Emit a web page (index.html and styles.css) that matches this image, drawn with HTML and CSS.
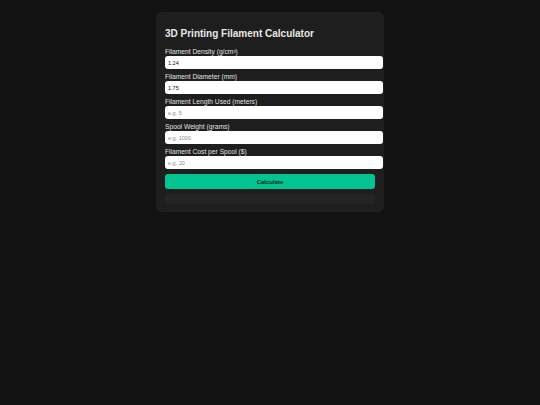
FILE: index.html
```html
<!DOCTYPE html>
<html>
<head>
<meta charset="utf-8">
<link rel="stylesheet" href="styles.css">
</head>
<body>
<div class="container">
  <h1 class="title">3D Printing Filament Calculator</h1>
  <div class="field">
    <label class="label">Filament Density (g/cm³)</label>
    <input class="input" type="text" value="1.24">
  </div>
  <div class="field">
    <label class="label">Filament Diameter (mm)</label>
    <input class="input" type="text" value="1.75">
  </div>
  <div class="field">
    <label class="label">Filament Length Used (meters)</label>
    <input class="input" type="text" placeholder="e.g. 5">
  </div>
  <div class="field">
    <label class="label">Spool Weight (grams)</label>
    <input class="input" type="text" placeholder="e.g. 1000">
  </div>
  <div class="field">
    <label class="label">Filament Cost per Spool ($)</label>
    <input class="input" type="text" placeholder="e.g. 20">
  </div>
  <button class="button">Calculate</button>
  <div class="result"></div>
</div>
</body>
</html>
```

FILE: styles.css
```css
html, body {
  margin: 0;
  padding: 0;
  background: #121212;
}
body {
  font-family: "Liberation Sans", Arial, sans-serif;
  color: #e0e0e0;
}
.container {
  width: 210px;
  margin: 12px auto 0;
  padding: 16px 9px 8px;
  background: #1e1e1e;
  border-radius: 6px;
}
.title {
  margin: 0 0 7px;
  font-size: 10px;
  line-height: 12px;
  font-weight: bold;
  color: #e8e8e8;
}
.field {
  margin-bottom: 3px;
}
.label {
  display: block;
  font-size: 6.7px;
  line-height: 9px;
  color: #e0e0e0;
}
.input {
  display: block;
  width: 100%;
  height: 13px;
  margin: 0;
  padding: 0 5px 0 3px;
  border: none;
  border-radius: 3px;
  background: #ffffff;
  color: #111;
  font-family: "Liberation Sans", Arial, sans-serif;
  font-size: 5.5px;
  outline: none;
}
.input::placeholder {
  color: #8a8a8a;
}
.button {
  display: block;
  width: 100%;
  height: 15px;
  margin: 5px 0 0;
  padding: 0;
  border: none;
  border-radius: 3px;
  background: #03c491;
  color: #0d1f18;
  font-family: "Liberation Sans", Arial, sans-serif;
  font-size: 6px;
  font-weight: bold;
}
.result {
  height: 10px;
  margin-top: 5px;
  border-radius: 3px;
  background: #242424;
}
```
